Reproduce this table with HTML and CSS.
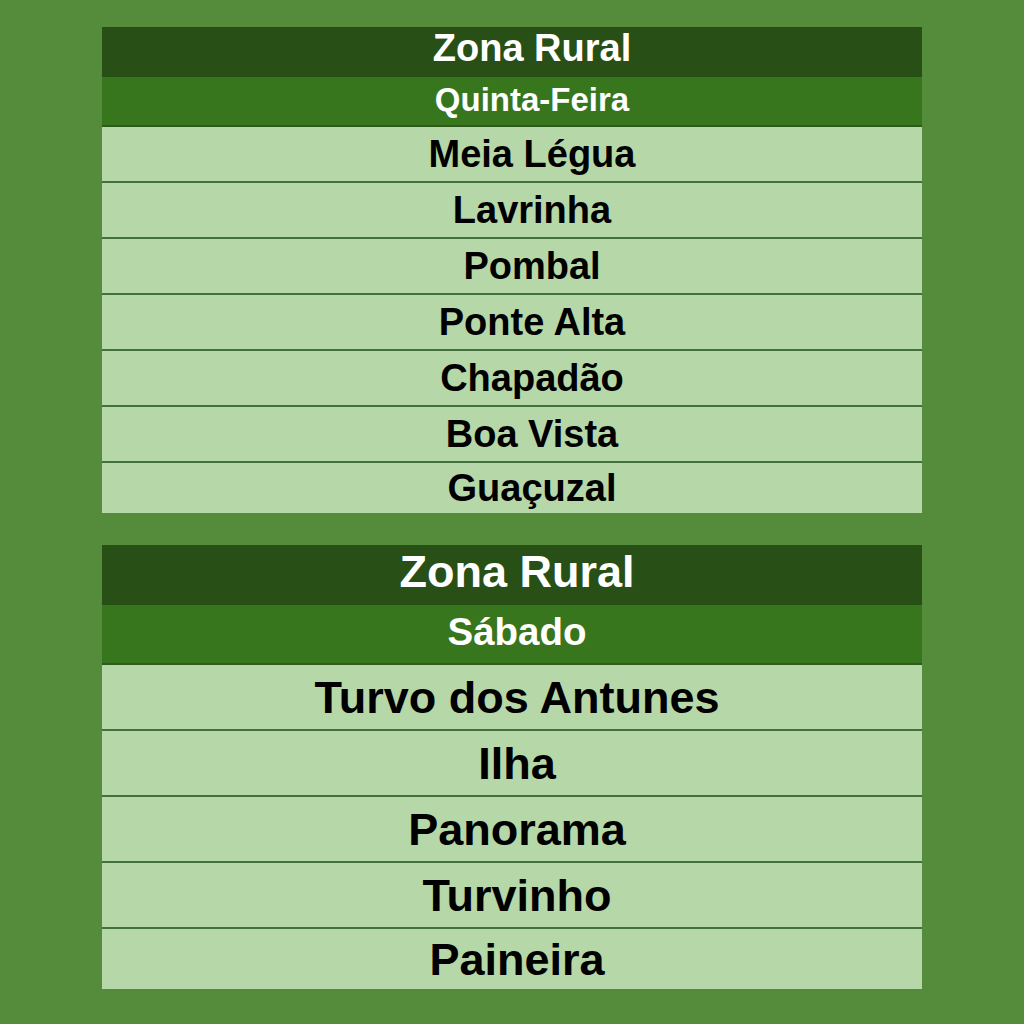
FILE: index.html
```html
<!DOCTYPE html>
<html lang="pt-BR">
<head>
<meta charset="utf-8">
<title>Zona Rural</title>
<link rel="stylesheet" href="styles.css">
</head>
<body>
<main class="page">
  <section class="schedule schedule--thu">
    <div class="cell cell--title">Zona Rural</div>
    <div class="cell cell--day">Quinta-Feira</div>
    <div class="cell cell--place">Meia Légua</div>
    <div class="cell cell--place">Lavrinha</div>
    <div class="cell cell--place">Pombal</div>
    <div class="cell cell--place">Ponte Alta</div>
    <div class="cell cell--place">Chapadão</div>
    <div class="cell cell--place">Boa Vista</div>
    <div class="cell cell--place">Guaçuzal</div>
  </section>
  <section class="schedule schedule--sat">
    <div class="cell cell--title">Zona Rural</div>
    <div class="cell cell--day">Sábado</div>
    <div class="cell cell--place">Turvo dos Antunes</div>
    <div class="cell cell--place">Ilha</div>
    <div class="cell cell--place">Panorama</div>
    <div class="cell cell--place">Turvinho</div>
    <div class="cell cell--place">Paineira</div>
  </section>
</main>
</body>
</html>
```
FILE: styles.css
```css
html, body {
  margin: 0;
  padding: 0;
}
body {
  background: #548c3b;
  font-family: "Liberation Sans", Arial, sans-serif;
  font-weight: bold;
  width: 1024px;
  height: 1024px;
  overflow: hidden;
}
.page {
  display: flex;
  flex-direction: column;
  align-items: center;
  gap: 32px;
  padding-top: 27px;
}
.schedule {
  width: 820px;
  display: flex;
  flex-direction: column;
}
.cell {
  box-sizing: border-box;
  display: flex;
  align-items: center;
  justify-content: center;
  white-space: nowrap;
  line-height: 1;
}
.cell--title {
  background: #284f16;
  color: #ffffff;
}
.cell--day {
  background: #38761d;
  color: #ffffff;
}
.cell--place {
  background: #b6d7a8;
  color: #000000;
  border-top: 2px solid #44713a;
}
.cell--day + .cell--place {
  border-top-color: #2e5a1c;
}

/* Thursday table */
.schedule--thu .cell {
  padding-left: 40px;
}
.schedule--thu .cell--title {
  height: 50px;
  font-size: 38px;
  padding-bottom: 9px;
}
.schedule--thu .cell--day {
  height: 48px;
  font-size: 33px;
  padding-bottom: 3px;
}
.schedule--thu .cell--place {
  height: 56px;
  font-size: 38px;
}
.schedule--thu .cell--place:last-child {
  height: 52px;
}

/* Saturday table */
.schedule--sat .cell {
  padding-left: 10px;
}
.schedule--sat .cell--title {
  height: 60px;
  font-size: 45px;
  padding-bottom: 7px;
}
.schedule--sat .cell--day {
  height: 58px;
  font-size: 38.5px;
  padding-bottom: 4px;
}
.schedule--sat .cell--place {
  height: 66px;
  font-size: 45px;
}
.schedule--sat .cell--place:last-child {
  height: 62px;
}
```
